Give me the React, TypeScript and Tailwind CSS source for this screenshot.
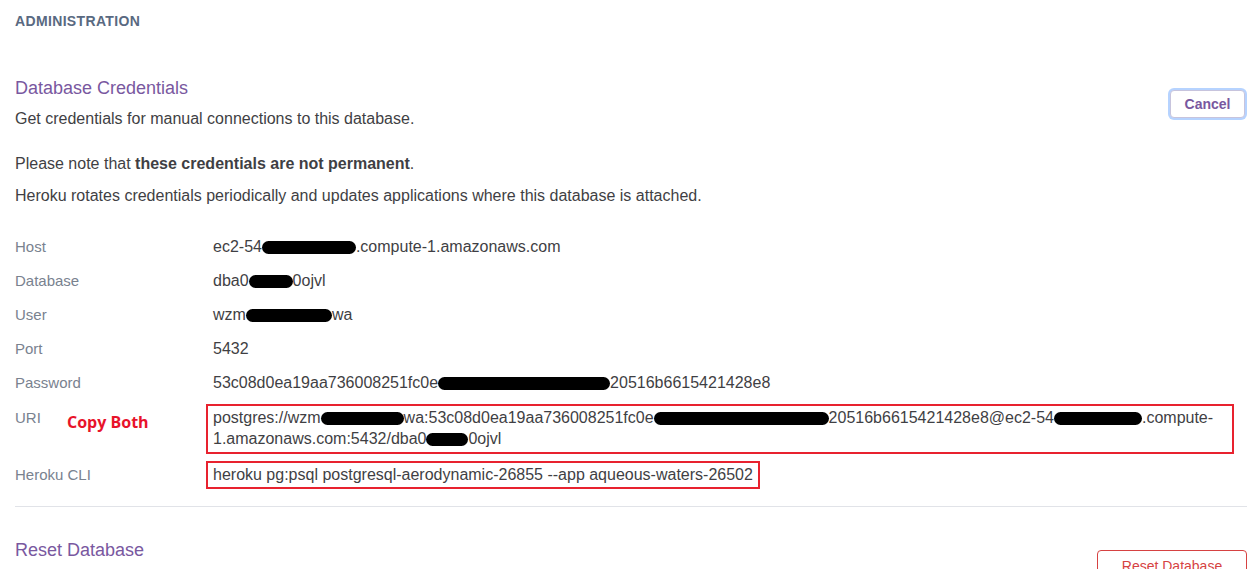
import React from 'react';

const Blot = ({ w }: { w: number }) => (
  <span
    className="inline-block h-[13px] align-[-2px] rounded-full bg-black"
    style={{ width: w }}
  />
);

const rows: { label: string; value: React.ReactNode }[] = [
  { label: 'Host', value: <>ec2-54<Blot w={94} />.compute-1.amazonaws.com</> },
  { label: 'Database', value: <>dba0<Blot w={44} />0ojvl</> },
  { label: 'User', value: <>wzm<Blot w={86} />wa</> },
  { label: 'Port', value: '5432' },
  { label: 'Password', value: <>53c08d0ea19aa736008251fc0e<Blot w={172} />20516b6615421428e8</> },
];

export default function App() {
  return (
    <div className="min-h-screen bg-white pl-[15px] pr-[8px] font-['Liberation_Sans',Arial,sans-serif] text-[#3f3f44]">
      <div className="pt-[12px] text-[14px] leading-[18px] font-semibold tracking-wide text-[#596981]">ADMINISTRATION</div>

      <div className="flex items-start justify-between">
        <div>
          <h2 className="mt-[46px] text-[18px] leading-[24px] font-light text-[#79589f]">Database Credentials</h2>
          <p className="mt-[8px] text-[16px] leading-[22px]">Get credentials for manual connections to this database.</p>
        </div>
        <button className="mt-[60px] mr-[2px] h-[28px] w-[75px] rounded-[4px] border border-[#c7c4dd] bg-white text-[14px] font-bold text-[#79589f] ring-2 ring-[#b6d3ff]">
          Cancel
        </button>
      </div>

      <p className="mt-[23px] text-[16px] leading-[22px]">
        Please note that <span className="font-bold">these credentials are not permanent</span>.
      </p>
      <p className="mt-[10px] text-[16px] leading-[22px]">
        Heroku rotates credentials periodically and updates applications where this database is attached.
      </p>

      <div className="mt-[23px] pr-[13px]">
        {rows.map((r) => (
          <div key={r.label} className="grid h-[34px] grid-cols-[191px_1fr] items-center text-[16px] leading-[22px]">
            <div className="text-[15px] text-[#79828f]">{r.label}</div>
            <div className="pl-[7px]">{r.value}</div>
          </div>
        ))}

        <div className="mt-[4px] grid grid-cols-[191px_1fr]">
          <div className="relative pt-[3px] text-[15px] leading-[21px] text-[#79828f]">
            URI
            <span className="absolute left-[52px] top-[8px] font-['Open_Sans',Arial,sans-serif] text-[16px] font-bold text-[#e8132a]">Copy Both</span>
          </div>
          <div className="border-2 border-[#e8222f] px-[5px] pt-[1px] pb-[3px] text-[16px] leading-[21px]">
            postgres://wzm<Blot w={83} />wa:53c08d0ea19aa736008251fc0e<Blot w={175} />20516b6615421428e8@ec2-54<Blot w={88} />.compute-
            <br />
            1.amazonaws.com:5432/dba0<Blot w={42} />0ojvl
          </div>
        </div>

        <div className="mt-[7px] grid grid-cols-[191px_1fr]">
          <div className="pt-[3px] text-[15px] leading-[21px] text-[#79828f]">Heroku CLI</div>
          <div>
            <div className="inline-block border-2 border-[#e8222f] px-[5px] py-[1px] text-[16px] leading-[22px]">
              heroku pg:psql postgresql-aerodynamic-26855 --app aqueous-waters-26502
            </div>
          </div>
        </div>
      </div>

      <div className="mt-[17px] border-t border-[#e1e3e8]" />

      <div className="flex items-start justify-between">
        <h2 className="mt-[31px] text-[18px] leading-[24px] font-light text-[#79589f]">Reset Database</h2>
        <button className="mt-[43px] h-[32px] w-[150px] rounded-[4px] border border-[#d64242] bg-white text-[14px] text-[#d64242]">
          Reset Database
        </button>
      </div>
    </div>
  );
}
